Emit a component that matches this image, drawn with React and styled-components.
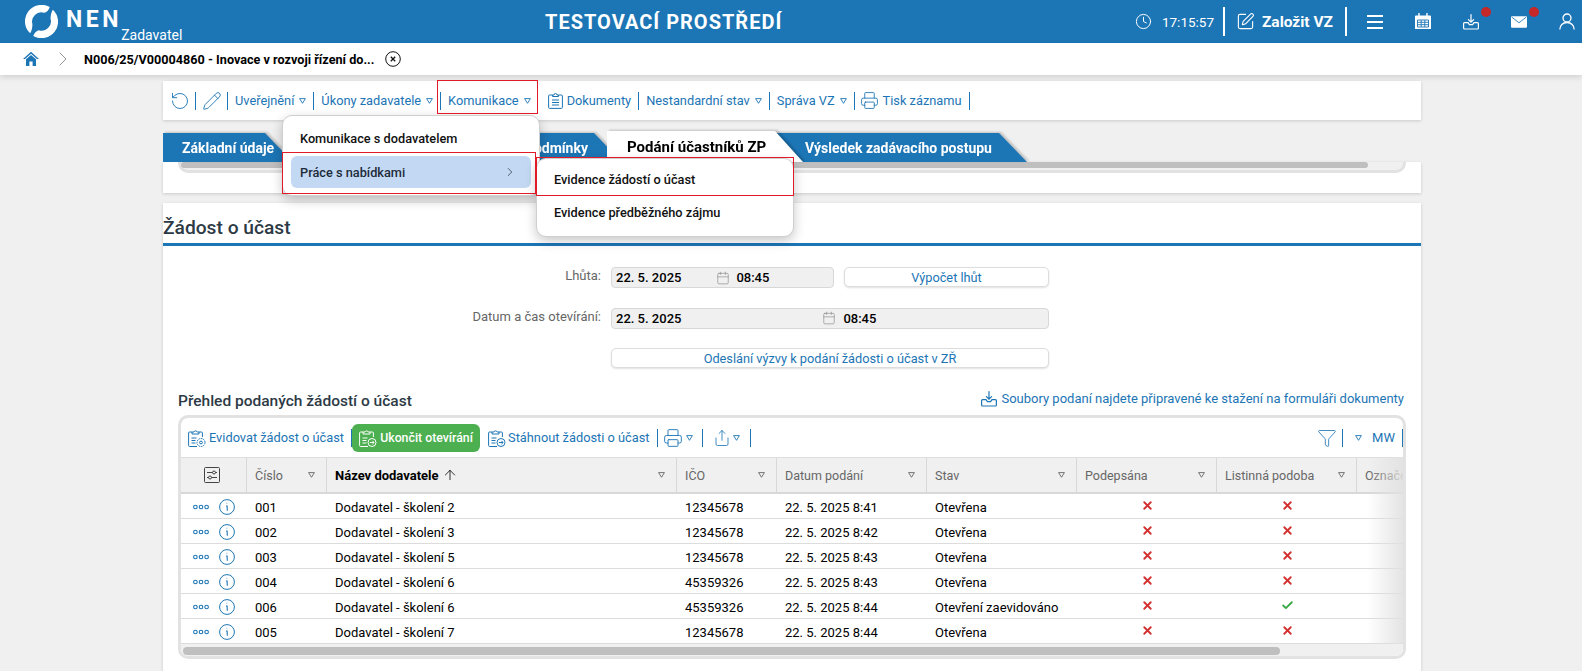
import React from 'react';
import styled, { createGlobalStyle } from 'styled-components';
import { Clock, SquarePen, RotateCcw, Pencil, Printer, Share, Funnel, Calendar, ChevronRight, ArrowUp, X, Check } from 'lucide-react';

const BLUE = '#1c75b5';

const Global = createGlobalStyle`
  html, body { margin: 0; padding: 0; height: 671px; overflow: hidden; background: #f0f0f0; }
  body { font-family: Roboto, "Liberation Sans", sans-serif; font-size: 13px; color: #000; }
  * { box-sizing: border-box; }
`;

const Root = styled.div`position: relative; width: 1582px; height: 671px; overflow: hidden;`;

const Header = styled.header`
  height: 43px; background: ${BLUE}; color: #fff; display: flex; align-items: center; padding: 0 7px 0 25px;
`;
const Brand = styled.div`width: 520px; display: flex; align-items: flex-start; height: 43px; padding-top: 5px;`;
const BrandName = styled.span`font-size: 23px; font-weight: 700; letter-spacing: 3.6px; margin: 3px 0 0 8px; line-height: 24px;`;
const BrandRole = styled.span`font-size: 14px; line-height: 14px; margin: 23px 0 0 -1px;`;
const Title = styled.h1`margin: 0; font-size: 20px; font-weight: 700; letter-spacing: 1px; white-space: nowrap;`;
const HeaderRight = styled.div`margin-left: auto; display: flex; align-items: center; height: 43px;`;
const Time = styled.span`font-size: 13.5px; margin-left: 10px; width: 48px; white-space: nowrap;`;
const HeaderSep = styled.span`width: 2px; height: 29px; background: #fff; margin: 0 12px 0 ${p => p.$l || 12}px;`;
const CreateLabel = styled.span`font-size: 15.5px; font-weight: 700; margin-left: 8px; white-space: nowrap;`;
const NavIcons = styled.div`display: flex; align-items: center; gap: 32px; margin-left: 8px;`;
const NavIcon = styled.span`position: relative; width: 16px; height: 18px; display: flex; align-items: center; justify-content: center;`;
const Badge = styled.span`position: absolute; width: 10px; height: 10px; border-radius: 50%; background: #c62828; top: -6px; left: 18px;`;

const IconBox = styled.span`
  flex: none; display: inline-flex; align-items: center; justify-content: center; width: ${p => p.$w}px;
  margin-left: ${p => p.$ml || 0}px; margin-right: ${p => p.$mr || 0}px;
  & > svg { flex: none; }
`;

const Crumbs = styled.nav`
  height: 32px; background: #fff; display: flex; align-items: center; padding-left: 23px;
  box-shadow: 0 2px 6px rgba(0,0,0,.14); position: relative; z-index: 2;
`;
const CrumbText = styled.span`font-size: 12.65px; font-weight: 700; margin-left: 9px; white-space: nowrap; width: 289px;`;

const Content = styled.main`width: 1258px; margin: 6px 0 0 163px;`;

const ToolBar = styled.div`
  height: 39px; background: #fff; display: flex; align-items: center; gap: 7px; padding-left: 8px; font-size: 12.8px;
  box-shadow: 0 1px 3px rgba(0,0,0,.16); color: ${BLUE}; position: relative;
`;
const ToolSep = styled.span`width: 1px; height: 18px; background: ${BLUE}; flex: none; margin-left: ${p => p.$ml || 0}px;`;
const ToolItem = styled.span`
  display: inline-flex; align-items: center; gap: ${p => p.$gap ?? 5}px; white-space: nowrap; flex: none; position: relative;
  margin-left: ${p => p.$ml || 0}px;
`;
const RedFrame = styled.span`
  position: absolute; border: 1px solid #e01a26; pointer-events: none; z-index: 9;
  left: ${p => p.$l}px; top: ${p => p.$t}px; width: ${p => p.$w}px; height: ${p => p.$h}px;
`;

const Tabs = styled.div`display: flex; height: 31px; margin-top: 11px; align-items: flex-end; position: relative;`;
const Tab = styled.div`
  position: relative; flex: none; height: ${p => p.$active ? 31 : 29}px; width: ${p => p.$w}px;
  margin-left: ${p => p.$ml || 0}px; z-index: ${p => p.$active ? 3 : 1};
  padding: 0 ${p => p.$pr || 0}px 0 ${p => p.$pl || 0}px;
  display: flex; align-items: center; justify-content: ${p => p.$end ? 'flex-end' : 'flex-start'};
  color: ${p => p.$active ? '#000' : '#fff'}; font-weight: 700; font-size: ${p => p.$active ? 15 : 14}px; white-space: nowrap;
  filter: drop-shadow(2px -1px 1px rgba(0,0,0,.2));
  &::before {
    content: ''; position: absolute; inset: 0; z-index: -1; background: ${p => p.$active ? '#fff' : BLUE};
    clip-path: polygon(0 0, calc(100% - 28px) 0, 100% 100%, 0 100%);
  }
`;

const TopCard = styled.section`height: 31px; background: #fff; box-shadow: 0 1px 3px rgba(0,0,0,.16); padding: 0 15px;`;
const TopFrame = styled.div`
  height: 11px; border: 3px solid #e2e2e2; border-top: 0; border-radius: 0 0 10px 10px; background: #f0f0f0; width: 1228px;
`;
const Thumb = styled.div`height: ${p => p.$h || 6}px; width: ${p => p.$w}px; background: #bfbfbf; border-radius: 4px;`;

const Card = styled.section`margin-top: 10px; height: 480px; background: #fff; box-shadow: 0 1px 3px rgba(0,0,0,.16);`;
const CardTitle = styled.h2`
  margin: 0; height: 43px; border-bottom: 3px solid ${BLUE}; font-size: 19.2px; font-weight: 500; color: #2d3a45; line-height: 49px; white-space: nowrap;
`;
const Form = styled.div`display: flex; flex-direction: column; gap: 20px; padding-top: 21px; height: 144px;`;
const FormRow = styled.div`display: flex; gap: 10px; height: 20.5px; align-items: flex-start;`;
const Label = styled.label`width: 438px; text-align: right; color: #666; font-size: 13px; line-height: 18px; white-space: nowrap;`;
const Field = styled.div`display: flex; gap: 10px; width: 438px;`;
const Input = styled.div`
  flex: ${p => p.$w ? `0 0 ${p.$w}px` : 1}; height: 21px; background: #f0f0f0; border: 1px solid #d8d8d8; border-radius: 4px;
  display: flex; align-items: center; padding-left: 4px; font-weight: 500; font-size: 13px;
`;
const GhostButton = styled.button`
  flex: 1; height: 20px; background: #fff; border: 1px solid #ddd; border-radius: 5px; color: ${BLUE}; font: 400 12.75px Roboto, sans-serif;
  box-shadow: 0 1px 2px rgba(0,0,0,.12); padding: 0;
`;

const SectionHead = styled.div`display: flex; align-items: center; justify-content: space-between; height: 20px; padding: 0 17px 0 15px; margin-top: 1px;`;
const SectionTitle = styled.h3`margin: 0; font-size: 15.5px; font-weight: 500; color: #2d3a45; white-space: nowrap;`;
const Hint = styled.span`display: inline-flex; align-items: center; gap: 4px; color: ${BLUE}; font-size: 13px; white-space: nowrap; margin-top: -5px;`;

const Frame = styled.div`
  margin: 4px 0 0 15px; width: 1228px; height: 244px; border: 3px solid #e2e2e2; border-radius: 10px; overflow: hidden; background: #fff;
`;
const TableBar = styled.div`height: 39px; display: flex; align-items: center; gap: 7px; padding: 0 0 0 7px; color: ${BLUE}; white-space: nowrap; font-size: 12.8px;`;
const GreenButton = styled.span`
  flex: none; margin: 0 1px 0 -7px; width: 128px; height: 28px; background: #4caf50; color: #fff; font-weight: 500; border-radius: 6px;
  display: inline-flex; align-items: center; justify-content: center; gap: 3px; font-size: 12.3px;
`;
const BarEnd = styled.div`margin-left: auto; display: flex; align-items: center; gap: 7px;`;
const Mw = styled.span`margin-left: 3px; font-size: 13px;`;

const Grid = styled.div`position: relative; overflow: hidden; height: 187px;
  &::after { content: ''; position: absolute; top: 0; bottom: 0; right: 0; width: 48px; background: linear-gradient(to right, rgba(225,225,225,0) 25%, rgba(225,225,225,.9)); }
`;
const COLS = '66px 80px 350px 100px 150px 150px 140px 140px 120px';
const HeadRow = styled.div`
  display: grid; grid-template-columns: ${COLS}; height: 37px; width: 1296px; background: #f0f0f0;
  border-top: 1px solid #ddd; border-bottom: 2px solid #d8d8d8;
`;
const HeadCell = styled.div`
  border-right: 1px solid #d8d8d8; display: flex; align-items: center; padding: 0 11px 0 8px; color: ${p => p.$strong ? '#000' : '#666'};
  font-weight: ${p => p.$strong ? 700 : 400}; font-size: ${p => p.$strong ? 13 : 12.5}px; white-space: nowrap;
  justify-content: ${p => p.$center ? 'center' : 'space-between'}; overflow: hidden;
`;
const HeadLabel = styled.span`display: inline-flex; align-items: center; gap: 3px;`;
const DataRow = styled.div`display: grid; grid-template-columns: ${COLS}; height: 25px; width: 1296px; border-bottom: 1px solid #dcdcdc; align-items: center; padding-top: 2px;`;
const Cell = styled.div`padding-left: 8px; white-space: nowrap; ${p => p.$center && 'padding: 0; display: flex; justify-content: center; margin-top: -3px;'}`;
const Actions = styled.div`display: flex; align-items: center; gap: 10px; padding-left: 12px; color: ${BLUE};`;
const Track = styled.div`height: 12px; background: #f0f0f0; padding: 3px 0 1px 2px;`;

const Popup = styled.div`
  position: absolute; left: ${p => p.$l}px; top: ${p => p.$t}px; width: 258px; height: ${p => p.$h}px; background: #fff; z-index: 6;
  border: 1px solid #cfcfcf; border-radius: 10px; box-shadow: 0 4px 12px rgba(0,0,0,.22); padding: ${p => p.$pad}px 8px 0 8px;
  display: flex; flex-direction: column; gap: ${p => p.$gap}px;
`;
const PopupItem = styled.div`
  flex: none; height: ${p => p.$h || 32}px; display: flex; align-items: center; justify-content: space-between; padding: 0 14px 0 9px;
  font-weight: 500; font-size: 12.75px; border-radius: 6px; color: ${p => p.$on ? '#1d2b3a' : '#111'};
  background: ${p => p.$on ? '#c3d9f3' : 'transparent'};
`;

const Tri = ({ c = 'currentColor' }) => (
  <svg width="7" height="6" viewBox="0 0 7 6" fill="none" stroke={c} strokeWidth=".9"><path d="M.6.6h5.8L3.5 5.3z" /></svg>
);
const LOGO_D = 'M24 2A16 16 0 0 0 5 27.5C6.6 25 7.2 22 7.2 18.5A8.9 8.9 0 0 1 18.6 7.6C21 7.2 23 5 24 2Z';
const Logo = () => (
  <svg width="33" height="33" viewBox="0 0 32 32" fill="#fff">
    <path d={LOGO_D} />
    <path d={LOGO_D} transform="rotate(180 16 16)" />
  </svg>
);
const Home = () => (
  <svg width="16" height="16" viewBox="0 0 16 16" fill={BLUE}><path d="M8 .8 0 8h2L8 2.8 14 8h2z" /><path d="M3 8.2 8 4l5 4.2V15H9.6v-4.4H6.4V15H3z" /></svg>
);
const CloseRound = () => (
  <IconBox $w={16} $ml={12}>
    <svg width="16" height="16" viewBox="0 0 16 16" fill="none" stroke="#111"><circle cx="8" cy="8" r="7.3" /><path d="m5.8 5.8 4.4 4.4m0-4.4-4.4 4.4" strokeWidth="1.3" /></svg>
  </IconBox>
);
const Burger = () => (
  <svg width="16" height="14" viewBox="0 0 16 14" fill="none" stroke="#fff" strokeWidth="2"><path d="M0 1h16M0 7h16M0 13h16" /></svg>
);
const UserLine = () => (
  <svg width="16" height="17" viewBox="0 0 16 17" fill="none" stroke="#fff" strokeWidth="1.3"><circle cx="8" cy="5" r="4" /><path d="M.8 16.5c0-4 3-7 7.2-7s7.2 3 7.2 7" /></svg>
);
const CalendarFilled = () => (
  <svg width="16" height="17" viewBox="0 0 16 17"><path d="M1 2.5h14a1 1 0 0 1 1 1V16H0V3.5a1 1 0 0 1 1-1z" fill="#fff" /><path d="M4 0v4M12 0v4" stroke="#fff" strokeWidth="1.4" /><path d="M2.5 7h11v7h-11zM6.2 7v7M9.8 7v7M2.5 9.3h11M2.5 11.7h11" fill="none" stroke={BLUE} strokeWidth=".9" /></svg>
);
const Inbox = ({ size = 16 }) => (
  <svg width={size} height={size} viewBox="0 0 16 16" fill="none" stroke="currentColor" strokeWidth="1.2" strokeLinecap="round"><path d="M8 .6v7.4M5.4 5.6 8 8.2l2.6-2.6" /><path d="M5 8.6H1.6a1 1 0 0 0-1 1v4.4a1 1 0 0 0 1 1h12.8a1 1 0 0 0 1-1V9.6a1 1 0 0 0-1-1H11L9.6 10.6H6.4z" /></svg>
);
const MailFilled = () => (
  <svg width="17" height="12" viewBox="0 0 17 12"><rect width="17" height="12" rx="1" fill="#fff" /><path d="m.8.8 7.7 6 7.7-6" fill="none" stroke={BLUE} strokeWidth=".9" /></svg>
);
const ClipDoc = ({ size = 15 }) => (
  <svg width={size} height={size + 2} viewBox="0 0 15 17" fill="none" stroke="currentColor" strokeWidth="1"><path d="M4.5 3H1.6a1 1 0 0 0-1 1v11.4a1 1 0 0 0 1 1h11.8a1 1 0 0 0 1-1V4a1 1 0 0 0-1-1h-2.9" /><path d="M4.5 4.5V3H6a1.5 1.5 0 0 1 3 0h1.5v1.5z" /><path d="M4 8h7M4 10.5h7M4 13h7" /></svg>
);
const ClipBadge = ({ kind = 'arrow', color = 'currentColor' }) => (
  <svg width="18" height="20" viewBox="0 0 18 20" fill="none" stroke={color} strokeWidth="1"><path d="M9 18.5H1.6a1 1 0 0 1-1-1V5a1 1 0 0 1 1-1H4M11 4h2.4a1 1 0 0 1 1 1v4" /><path d="M4 6V4h2a1.7 1.7 0 0 1 3.2 0H11v2z" /><path d="M3.5 10h5M3.5 12.5h4M3.5 15h4" /><circle cx="13" cy="14.5" r="4" strokeDasharray={kind === 'gear' ? '1.6 .7' : undefined} />{kind === 'gear' ? <circle cx="13" cy="14.5" r="1.4" /> : <path d="M10.8 14.5h4.2M13.4 12.8l1.7 1.7-1.7 1.7" />}</svg>
);
const Sliders = () => (
  <svg width="16" height="16" viewBox="0 0 16 16" fill="none" stroke="#444" strokeWidth="1"><rect x=".5" y=".5" width="15" height="15" rx="1" /><path d="M3 5.5h5.5M11.5 5.5H13M3 10.5h1.5M7.5 10.5H13" /><circle cx="10" cy="5.5" r="1.5" /><circle cx="6" cy="10.5" r="1.5" /></svg>
);
const Dots = () => (
  <svg width="16" height="6" viewBox="0 0 16 6" fill="none" stroke={BLUE} strokeWidth="1.1"><circle cx="2.4" cy="3" r="1.8" /><circle cx="8" cy="3" r="1.8" /><circle cx="13.6" cy="3" r="1.8" /></svg>
);
const InfoRound = () => (
  <svg width="16" height="16" viewBox="0 0 16 16" fill="none" stroke={BLUE}><circle cx="8" cy="8" r="7.4" /><path d="M7.6 4.2h.6M7 7h1.1l.2 4.8" strokeWidth="1.1" /></svg>
);

const rows = [
  ['001', 'Dodavatel - školení 2', '12345678', '22. 5. 2025 8:41', 'Otevřena', 0],
  ['002', 'Dodavatel - školení 3', '12345678', '22. 5. 2025 8:42', 'Otevřena', 0],
  ['003', 'Dodavatel - školení 5', '12345678', '22. 5. 2025 8:43', 'Otevřena', 0],
  ['004', 'Dodavatel - školení 6', '45359326', '22. 5. 2025 8:43', 'Otevřena', 0],
  ['006', 'Dodavatel - školení 6', '45359326', '22. 5. 2025 8:44', 'Otevření zaevidováno', 1],
  ['005', 'Dodavatel - školení 7', '12345678', '22. 5. 2025 8:44', 'Otevřena', 0],
];
const heads = ['IČO', 'Datum podání', 'Stav', 'Podepsána', 'Listinná podoba'];
const No = () => <X size={13} color="#d32f2f" strokeWidth={3.4} />;
const Yes = () => <Check size={13} color="#3aa845" strokeWidth={3.4} />;

export default function App() {
  return (
    <Root>
      <Global />
      <Header>
        <Brand>
          <Logo />
          <BrandName>NEN</BrandName>
          <BrandRole>Zadavatel</BrandRole>
        </Brand>
        <Title>TESTOVACÍ PROSTŘEDÍ</Title>
        <HeaderRight>
          <IconBox $w={16}><Clock size={17} strokeWidth={1.4} /></IconBox>
          <Time>17:15:57</Time>
          <HeaderSep $l={13} />
          <IconBox $w={17}><SquarePen size={19} strokeWidth={1.4} /></IconBox>
          <CreateLabel>Založit VZ</CreateLabel>
          <HeaderSep />
          <NavIcons>
            <NavIcon><Burger /></NavIcon>
            <NavIcon><CalendarFilled /></NavIcon>
            <NavIcon><Inbox /><Badge /></NavIcon>
            <NavIcon><MailFilled /><Badge /></NavIcon>
            <NavIcon><UserLine /></NavIcon>
          </NavIcons>
        </HeaderRight>
      </Header>
      <Crumbs>
        <Home />
        <IconBox $w={24} $ml={12}><ChevronRight size={24} color="#777" strokeWidth={.8} /></IconBox>
        <CrumbText>N006/25/V00004860 - Inovace v rozvoji řízení do...</CrumbText>
        <CloseRound />
      </Crumbs>
      <Content>
        <ToolBar>
          <IconBox $w={17}><RotateCcw size={20} strokeWidth={1.1} /></IconBox>
          <ToolSep />
          <IconBox $w={17}><Pencil size={20} strokeWidth={1.1} /></IconBox>
          <ToolSep />
          <ToolItem>Uveřejnění<Tri /></ToolItem>
          <ToolSep />
          <ToolItem>Úkony zadavatele<Tri /></ToolItem>
          <ToolSep />
          <ToolItem>Komunikace<Tri /></ToolItem>
          <ToolItem $ml={10} $gap={4}><ClipDoc />Dokumenty</ToolItem>
          <ToolSep />
          <ToolItem>Nestandardní stav<Tri /></ToolItem>
          <ToolSep />
          <ToolItem>Správa VZ<Tri /></ToolItem>
          <ToolSep />
          <ToolItem><IconBox $w={16}><Printer size={19} strokeWidth={1.1} /></IconBox>Tisk záznamu</ToolItem>
          <ToolSep />
        </ToolBar>
        <Tabs>
          <Tab $w={130} $pl={19}>Základní údaje</Tab>
          <Tab $w={329} $pr={34} $end>Zadávací podmínky</Tab>
          <Tab $w={196} $ml={-15} $pl={20} $active>Podání účastníků ZP</Tab>
          <Tab $w={252} $ml={-28} $pl={30}>Výsledek zadávacího postupu</Tab>
        </Tabs>
        <TopCard>
          <TopFrame><Thumb $w={1187} /></TopFrame>
        </TopCard>
        <Card>
          <CardTitle>Žádost o účast</CardTitle>
          <Form>
            <FormRow>
              <Label>Lhůta:</Label>
              <Field>
                <Input $w={223}>22. 5. 2025<IconBox $w={14} $ml={35} $mr={6}><Calendar size={14} strokeWidth={1.1} color="#888" /></IconBox>08:45</Input>
                <GhostButton>Výpočet lhůt</GhostButton>
              </Field>
            </FormRow>
            <FormRow>
              <Label>Datum a čas otevírání:</Label>
              <Field>
                <Input>22. 5. 2025<IconBox $w={14} $ml={141} $mr={7}><Calendar size={14} strokeWidth={1.1} color="#888" /></IconBox>08:45</Input>
              </Field>
            </FormRow>
            <FormRow>
              <Label />
              <Field><GhostButton>Odeslání výzvy k podání žádosti o účast v ZŘ</GhostButton></Field>
            </FormRow>
          </Form>
          <SectionHead>
            <SectionTitle>Přehled podaných žádostí o účast</SectionTitle>
            <Hint><Inbox />Soubory podaní najdete připravené ke stažení na formuláři dokumenty</Hint>
          </SectionHead>
          <Frame>
            <TableBar>
              <ToolItem $gap={3}><ClipBadge kind="gear" />Evidovat žádost o účast</ToolItem>
              <ToolSep />
              <GreenButton><ClipBadge color="#fff" />Ukončit otevírání</GreenButton>
              <ToolItem $gap={2}><ClipBadge />Stáhnout žádosti o účast</ToolItem>
              <ToolSep />
              <ToolItem $gap={4}><IconBox $w={17}><Printer size={20} strokeWidth={1.1} /></IconBox><Tri /></ToolItem>
              <ToolSep $ml={2} />
              <ToolItem $gap={4} $ml={5}><IconBox $w={14}><Share size={18} strokeWidth={1.1} /></IconBox><Tri /></ToolItem>
              <ToolSep $ml={3} />
              <BarEnd>
                <IconBox $w={17}><Funnel size={20} strokeWidth={1} /></IconBox>
                <ToolSep />
                <ToolItem $ml={5}><Tri /></ToolItem>
                <Mw>MW</Mw>
                <ToolSep />
              </BarEnd>
            </TableBar>
            <Grid>
              <HeadRow>
                <HeadCell $center><Sliders /></HeadCell>
                <HeadCell>Číslo<Tri c="#666" /></HeadCell>
                <HeadCell $strong><HeadLabel>Název dodavatele<ArrowUp size={16} strokeWidth={1.2} /></HeadLabel><Tri c="#666" /></HeadCell>
                {heads.map(h => <HeadCell key={h}>{h}<Tri c="#666" /></HeadCell>)}
                <HeadCell>Označení</HeadCell>
              </HeadRow>
              {rows.map(r => (
                <DataRow key={r[0]}>
                  <Actions><Dots /><InfoRound /></Actions>
                  <Cell>{r[0]}</Cell>
                  <Cell>{r[1]}</Cell>
                  <Cell>{r[2]}</Cell>
                  <Cell>{r[3]}</Cell>
                  <Cell>{r[4]}</Cell>
                  <Cell $center><No /></Cell>
                  <Cell $center>{r[5] ? <Yes /> : <No />}</Cell>
                  <Cell />
                </DataRow>
              ))}
            </Grid>
            <Track><Thumb $h={8} $w={1097} /></Track>
          </Frame>
        </Card>
      </Content>
      <RedFrame $l={437} $t={80} $w={101} $h={34} />
      <Popup $l={282} $t={115} $h={81} $pad={6} $gap={2}>
        <PopupItem $h={32}>Komunikace s dodavatelem</PopupItem>
        <PopupItem $on>Práce s nabídkami<ChevronRight size={14} strokeWidth={1.2} /></PopupItem>
      </Popup>
      <RedFrame $l={282} $t={152} $w={254} $h={42} />
      <Popup $l={536} $t={158} $h={79} $pad={4} $gap={1}>
        <PopupItem>Evidence žádostí o účast</PopupItem>
        <PopupItem>Evidence předběžného zájmu</PopupItem>
      </Popup>
      <RedFrame $l={536} $t={157} $w={258} $h={39} />
    </Root>
  );
}
